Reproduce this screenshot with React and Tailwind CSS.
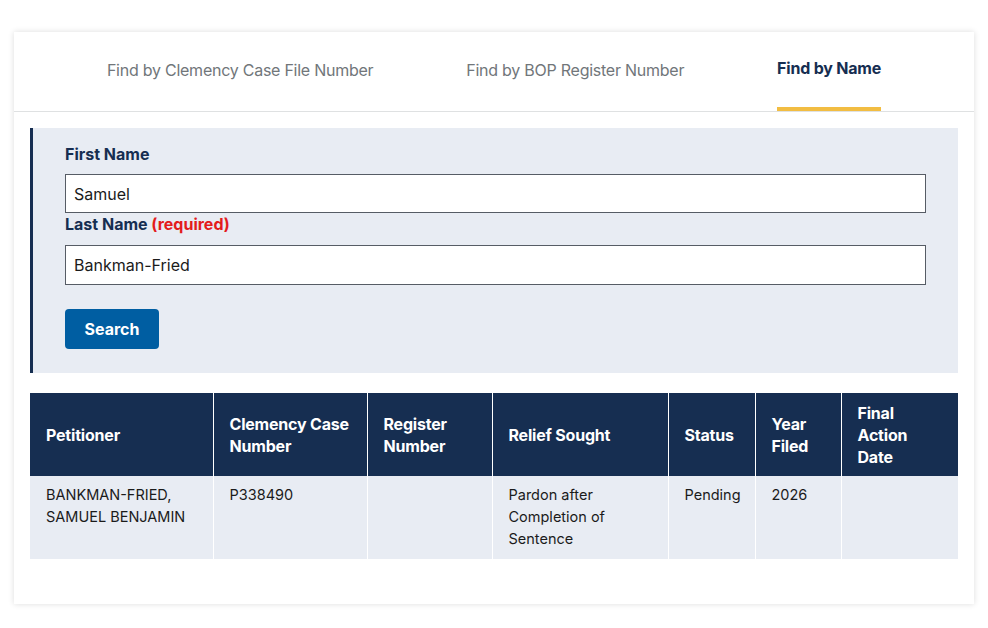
import React, { useState } from "react";

const tabs = [
  "Find by Clemency Case File Number",
  "Find by BOP Register Number",
  "Find by Name",
];

const columns = [
  { label: "Petitioner", width: "w-[183px]" },
  { label: "Clemency Case Number", width: "w-[154px]" },
  { label: "Register Number", width: "w-[125px]" },
  { label: "Relief Sought", width: "w-[176px]" },
  { label: "Status", width: "w-[87px]" },
  { label: "Year Filed", width: "w-[86px]" },
  { label: "Final Action Date", width: "w-[117px]" },
];

const rows = [
  [
    "BANKMAN-FRIED, SAMUEL BENJAMIN",
    "P338490",
    "",
    "Pardon after Completion of Sentence",
    "Pending",
    "2026",
    "",
  ],
];

export default function App() {
  const [active, setActive] = useState(2);
  const [firstName, setFirstName] = useState("Samuel");
  const [lastName, setLastName] = useState("Bankman-Fried");

  return (
    <div
      className="min-h-screen bg-white px-[14px] pt-8 text-[#1b1b1b]"
      style={{ fontFamily: "Inter, 'Liberation Sans', sans-serif" }}
    >
      <div className="bg-white pb-[45px] shadow-[0_0_6px_rgba(0,0,0,0.14)]">
        {/* tab bar */}
        <div className="flex h-[80px] justify-evenly border-b border-[#dfe1e2]">
          {tabs.map((tab, i) => (
            <button
              key={tab}
              onClick={() => setActive(i)}
              className={
                i === active
                  ? "flex items-center border-b-4 border-[#f2bd42] pb-[3px] text-[16px] font-bold tracking-[-0.2px] text-[#162e51]"
                  : "flex items-center pb-[3px] text-[16px] tracking-[-0.25px] text-[#71767a]"
              }
            >
              {tab}
            </button>
          ))}
        </div>

        <div className="px-4 pt-4">
          {/* search form */}
          <form
            className="border-l-[3px] border-[#162e51] bg-[#e8ecf3] pb-6 pl-8 pr-8 pt-[15px]"
            onSubmit={(e) => e.preventDefault()}
          >
            <label className="block text-[16px] font-bold leading-[22px] text-[#162e51]">
              First Name
            </label>
            <input
              value={firstName}
              onChange={(e) => setFirstName(e.target.value)}
              className="mt-[9px] block h-[39px] w-full border border-[#565c65] bg-white px-2 text-[16px] text-[#1b1b1b] outline-none"
            />
            <label className="block text-[16px] font-bold leading-[22px] text-[#162e51]">
              Last Name <span className="text-[#e31c1c]">(required)</span>
            </label>
            <input
              value={lastName}
              onChange={(e) => setLastName(e.target.value)}
              className="mt-[10px] block h-[40px] w-full border border-[#565c65] bg-white px-2 text-[16px] text-[#1b1b1b] outline-none"
            />
            <button
              type="submit"
              className="mt-[24px] h-[40px] w-[94px] rounded-[4px] bg-[#005ea2] text-[16px] font-bold text-white"
            >
              Search
            </button>
          </form>

          {/* results */}
          <table className="mt-[20px] w-full table-fixed border-collapse">
            <thead>
              <tr className="bg-[#162e51]">
                {columns.map((col, i) => (
                  <th
                    key={col.label}
                    className={`${col.width} ${
                      i > 0 ? "border-l border-white" : ""
                    } h-[83px] py-2 pl-4 pr-3 text-left align-middle text-[16px] font-bold leading-[22px] tracking-[-0.2px] text-white`}
                  >
                    {col.label}
                  </th>
                ))}
              </tr>
            </thead>
            <tbody>
              {rows.map((row) => (
                <tr key={row[1]} className="bg-[#e8ecf3]">
                  {row.map((cell, i) => (
                    <td
                      key={i}
                      className={`${
                        i > 0 ? "border-l border-white" : ""
                      } h-[83px] px-4 pb-[9px] pt-2 align-top text-[14.5px] leading-[22px] text-[#1b1b1b]`}
                    >
                      {cell}
                    </td>
                  ))}
                </tr>
              ))}
            </tbody>
          </table>
        </div>
      </div>
    </div>
  );
}
